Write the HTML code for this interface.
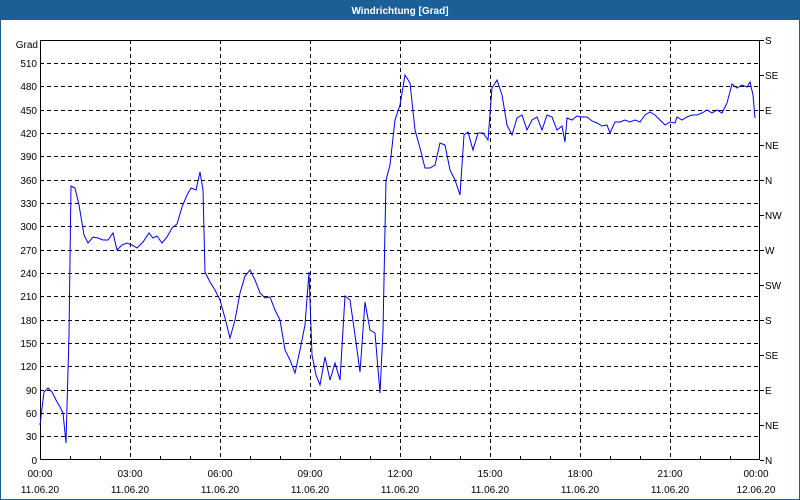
<!DOCTYPE html>
<html><head><style>
html,body{margin:0;padding:0;width:800px;height:500px;overflow:hidden;background:#fff;}
svg text{font-family:"Liberation Sans",sans-serif;font-size:10px;fill:#000;}
</style></head><body>
<svg width="800" height="500" xmlns="http://www.w3.org/2000/svg">
<rect x="0" y="0" width="800" height="500" fill="#fff"/>
<rect x="0.5" y="0.5" width="799" height="499" fill="none" stroke="#1c5f96"/>
<rect x="0" y="0" width="800" height="20" fill="#1c5f96"/>
<text x="400" y="14" text-anchor="middle" style="fill:#fff;font-weight:bold;font-size:10px">Windrichtung [Grad]</text>
<g stroke="#000" stroke-dasharray="4,3" stroke-width="1">
<line x1="40" x2="760" y1="63.5" y2="63.5"/><line x1="40" x2="760" y1="86.5" y2="86.5"/><line x1="40" x2="760" y1="110.5" y2="110.5"/>
<line x1="40" x2="760" y1="133.5" y2="133.5"/><line x1="40" x2="760" y1="156.5" y2="156.5"/><line x1="40" x2="760" y1="180.5" y2="180.5"/>
<line x1="40" x2="760" y1="203.5" y2="203.5"/><line x1="40" x2="760" y1="226.5" y2="226.5"/><line x1="40" x2="760" y1="250.5" y2="250.5"/>
<line x1="40" x2="760" y1="273.5" y2="273.5"/><line x1="40" x2="760" y1="296.5" y2="296.5"/><line x1="40" x2="760" y1="320.5" y2="320.5"/>
<line x1="40" x2="760" y1="343.5" y2="343.5"/><line x1="40" x2="760" y1="366.5" y2="366.5"/><line x1="40" x2="760" y1="390.5" y2="390.5"/>
<line x1="40" x2="760" y1="413.5" y2="413.5"/><line x1="40" x2="760" y1="436.5" y2="436.5"/>
<line y1="40" y2="460" x1="130.5" x2="130.5"/><line y1="40" y2="460" x1="220.5" x2="220.5"/><line y1="40" y2="460" x1="310.5" x2="310.5"/>
<line y1="40" y2="460" x1="400.5" x2="400.5"/><line y1="40" y2="460" x1="490.5" x2="490.5"/><line y1="40" y2="460" x1="580.5" x2="580.5"/><line y1="40" y2="460" x1="670.5" x2="670.5"/>
</g>
<rect x="40.5" y="40.5" width="719" height="419" fill="none" stroke="#000"/>
<g stroke="#000">
<line x1="760" x2="764" y1="40.5" y2="40.5"/><line x1="760" x2="764" y1="75.5" y2="75.5"/><line x1="760" x2="764" y1="110.5" y2="110.5"/><line x1="760" x2="764" y1="145.5" y2="145.5"/><line x1="760" x2="764" y1="180.5" y2="180.5"/><line x1="760" x2="764" y1="215.5" y2="215.5"/><line x1="760" x2="764" y1="250.5" y2="250.5"/><line x1="760" x2="764" y1="285.5" y2="285.5"/><line x1="760" x2="764" y1="320.5" y2="320.5"/><line x1="760" x2="764" y1="355.5" y2="355.5"/><line x1="760" x2="764" y1="390.5" y2="390.5"/><line x1="760" x2="764" y1="425.5" y2="425.5"/><line x1="760" x2="764" y1="460.5" y2="460.5"/>
<line x1="70.5" x2="70.5" y1="456" y2="460"/><line x1="100.5" x2="100.5" y1="456" y2="460"/><line x1="160.5" x2="160.5" y1="456" y2="460"/><line x1="190.5" x2="190.5" y1="456" y2="460"/><line x1="250.5" x2="250.5" y1="456" y2="460"/><line x1="280.5" x2="280.5" y1="456" y2="460"/><line x1="340.5" x2="340.5" y1="456" y2="460"/><line x1="370.5" x2="370.5" y1="456" y2="460"/><line x1="430.5" x2="430.5" y1="456" y2="460"/><line x1="460.5" x2="460.5" y1="456" y2="460"/><line x1="520.5" x2="520.5" y1="456" y2="460"/><line x1="550.5" x2="550.5" y1="456" y2="460"/><line x1="610.5" x2="610.5" y1="456" y2="460"/><line x1="640.5" x2="640.5" y1="456" y2="460"/><line x1="700.5" x2="700.5" y1="456" y2="460"/><line x1="730.5" x2="730.5" y1="456" y2="460"/>
</g>
<g text-anchor="end">
<text x="38" y="48">Grad</text><text x="37" y="67">510</text><text x="37" y="90">480</text><text x="37" y="114">450</text><text x="37" y="137">420</text><text x="37" y="160">390</text><text x="37" y="184">360</text><text x="37" y="207">330</text><text x="37" y="230">300</text><text x="37" y="254">270</text><text x="37" y="277">240</text><text x="37" y="300">210</text><text x="37" y="324">180</text><text x="37" y="347">150</text><text x="37" y="370">120</text><text x="37" y="394">90</text><text x="37" y="417">60</text><text x="37" y="440">30</text><text x="37" y="464">0</text>
</g>
<g>
<text x="765" y="44">S</text><text x="765" y="79">SE</text><text x="765" y="114">E</text><text x="765" y="149">NE</text><text x="765" y="184">N</text><text x="765" y="219">NW</text><text x="765" y="254">W</text><text x="765" y="289">SW</text><text x="765" y="324">S</text><text x="765" y="359">SE</text><text x="765" y="394">E</text><text x="765" y="429">NE</text><text x="765" y="464">N</text>
</g>
<g text-anchor="middle">
<text x="40" y="477">00:00</text><text x="40" y="493">11.06.20</text>
<text x="130" y="477">03:00</text><text x="130" y="493">11.06.20</text>
<text x="220" y="477">06:00</text><text x="220" y="493">11.06.20</text>
<text x="310" y="477">09:00</text><text x="310" y="493">11.06.20</text>
<text x="400" y="477">12:00</text><text x="400" y="493">11.06.20</text>
<text x="490" y="477">15:00</text><text x="490" y="493">11.06.20</text>
<text x="580" y="477">18:00</text><text x="580" y="493">11.06.20</text>
<text x="670" y="477">21:00</text><text x="670" y="493">11.06.20</text>
<text x="756" y="477">00:00</text><text x="756" y="493">12.06.20</text>
</g>
<polyline fill="none" stroke="#0000ee" stroke-width="1" points="40,425 44,392 48,388 52,392 56,400 60,407 63,413 66,443 69,335 71,186 75,188 79,205 84,235 88,243 93,237 98,238 103,240 108,240 113,233 117,250 122,245 127,243 132,245 137,248 143,242 149,233 153,238 157,236 162,243 167,237 172,228 177,224 182,207 187,195 191,188 196,190 200,172 203,190 205,272 210,282 215,290 220,300 225,318 230,338 235,320 240,293 245,276 250,270 255,280 260,293 265,298 270,297 275,310 280,320 285,350 290,360 295,373 300,350 305,325 309,272 312,355 316,375 320,385 325,357 330,380 335,363 340,380 345,296 350,300 355,335 360,372 365,302 370,330 375,333 380,393 383,330 386,180 390,165 395,120 400,105 405,75 410,83 415,130 420,148 425,168 430,168 435,165 440,143 445,145 450,170 455,180 460,195 464,135 468,132 473,150 478,133 483,133 488,140 492,88 497,80 502,95 507,125 512,135 517,118 522,115 527,130 532,120 537,117 542,130 547,115 552,117 557,130 562,126 565,142 567,118 572,120 577,116 582,117 587,117 592,121 597,123 602,126 607,125 610,133 615,122 620,122 625,120 630,122 635,120 640,122 645,115 650,112 655,115 660,120 665,125 670,122 675,123 677,117 682,120 687,117 692,115 697,115 702,113 707,110 712,113 717,110 722,113 727,103 732,84 737,88 742,85 747,87 750,82 753,95 755,118"/>
</svg>
</body></html>
